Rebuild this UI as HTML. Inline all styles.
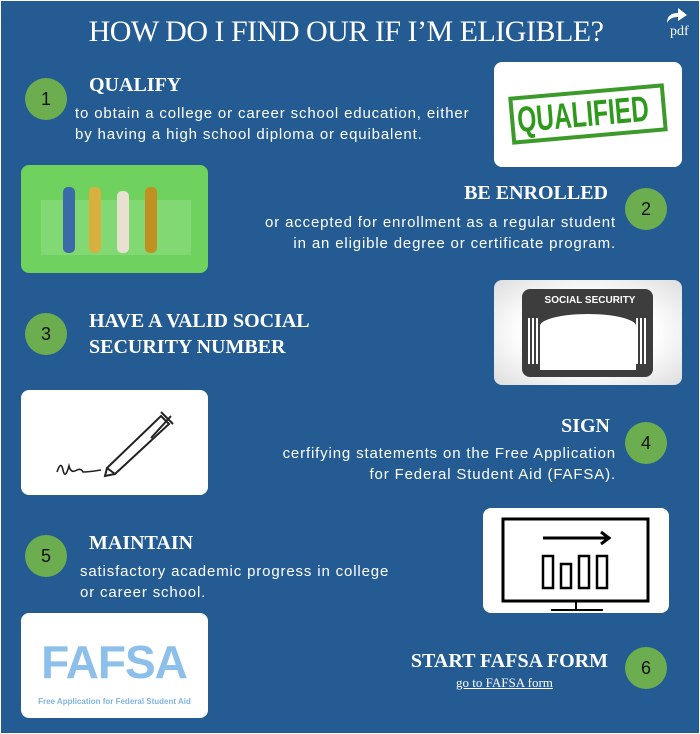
<!DOCTYPE html>
<html><head><meta charset="utf-8"><style>
*{margin:0;padding:0;box-sizing:border-box}
body{width:700px;height:734px;background:#fff;overflow:hidden;font-family:"Liberation Sans",sans-serif}
#m{position:absolute;left:1px;top:1px;width:698px;height:732px;background:#235b92}
.a{position:absolute}
h1{position:absolute;left:0;width:692px;top:15px;text-align:center;font:normal 30px "Liberation Serif",serif;color:#fff;letter-spacing:-0.5px}
.c{position:absolute;width:42px;height:42px;border-radius:50%;background:#6cae4f;color:#111;font-size:18px;text-align:center;line-height:42px}
.h{position:absolute;font:bold 20px "Liberation Serif",serif;color:#fff;line-height:26px}
.t{position:absolute;font-size:15px;color:#fff;line-height:21px;letter-spacing:0.85px;white-space:nowrap}
.r{text-align:right}
.box{position:absolute;background:#fff;border-radius:8px;overflow:hidden}
</style></head><body><div id="m"></div>
<h1>HOW DO I FIND OUR IF I’M ELIGIBLE?</h1>
<div class="a" style="left:664px;top:7px;color:#fff;font:14px 'Liberation Serif',serif">
<svg width="26" height="16" viewBox="0 0 26 16"><path d="M3 16 Q3 6 14 6 L14 1 L23 8 L14 14 L14 10 Q6 10 3 16Z" fill="#fff"/></svg><div style="margin-top:-4px;margin-left:6px">pdf</div></div>

<div class="c" style="left:25px;top:78px">1</div>
<div class="h" style="left:89px;top:72px">QUALIFY</div>
<div class="t" style="left:75px;top:103px">to obtain a college or career school education, either<br>by having a high school diploma or equibalent.</div>
<div class="box" style="left:494px;top:62px;width:188px;height:105px">
<div class="a" style="left:16px;top:28px;width:156px;height:48px;border:4px solid #3c9a2a;transform:rotate(-5deg);overflow:hidden"><div style="color:#2e9a1c;font:bold 36px 'Liberation Sans',sans-serif;line-height:40px;transform:scaleX(0.68);transform-origin:0 0;white-space:nowrap;margin-left:3px">QUALIFIED</div></div></div>

<div class="box" style="left:21px;top:165px;width:187px;height:108px;background:#6fd15e">
<div class="a" style="left:20px;top:35px;width:150px;height:55px;background:#8fdc80;opacity:.6"></div>
<div class="a" style="left:42px;top:22px;width:12px;height:66px;background:#3a6aa8;border-radius:5px"></div>
<div class="a" style="left:68px;top:22px;width:12px;height:66px;background:#d8b040;border-radius:5px"></div>
<div class="a" style="left:96px;top:26px;width:12px;height:62px;background:#e8e0d0;border-radius:5px"></div>
<div class="a" style="left:124px;top:22px;width:12px;height:66px;background:#c09020;border-radius:5px"></div></div>
<div class="h r" style="right:92px;top:180px">BE ENROLLED</div>
<div class="t r" style="right:84px;top:212px">or accepted for enrollment as a regular student<br>in an eligible degree or certificate program.</div>
<div class="c" style="left:625px;top:188px">2</div>

<div class="c" style="left:25px;top:313px">3</div>
<div class="h" style="left:89px;top:308px">HAVE A VALID SOCIAL<br>SECURITY NUMBER</div>
<div class="box" style="left:494px;top:280px;width:188px;height:105px;background:radial-gradient(#fff 50%,#ddd)">
<div class="a" style="left:28px;top:9px;width:131px;height:88px;background:#3d3d3d;border-radius:8px"></div>
<div class="a" style="left:46px;top:34px;width:96px;height:56px;background:#fff;border-radius:50% 50% 0 0/12px 12px 0 0"></div>
<div class="a" style="left:34px;top:38px;width:12px;height:46px;background:repeating-linear-gradient(90deg,#fff 0 2px,#3d3d3d 2px 4px)"></div>
<div class="a" style="left:142px;top:38px;width:12px;height:46px;background:repeating-linear-gradient(90deg,#fff 0 2px,#3d3d3d 2px 4px)"></div>
<div class="a" style="left:36px;top:15px;width:120px;text-align:center;color:#fff;font:bold 10px 'Liberation Sans',sans-serif">SOCIAL SECURITY</div></div>

<div class="box" style="left:21px;top:390px;width:187px;height:105px">
<svg width="187" height="105"><path d="M36 82 Q40 70 42 80 Q44 90 48 76 Q50 84 56 80 Q60 78 62 82 Q68 82 80 80" stroke="#222" stroke-width="1.6" fill="none"/><path d="M86 78 L140 26 L148 34 L94 84 Z M86 78 L84 86 L94 84" stroke="#222" stroke-width="2" fill="none"/><path d="M140 22 L152 34 M150 26 L130 48" stroke="#222" stroke-width="2" fill="none"/></svg></div>
<div class="h r" style="right:90px;top:413px">SIGN</div>
<div class="t r" style="right:84px;top:443px">cerfifying statements on the Free Application<br>for Federal Student Aid (FAFSA).</div>
<div class="c" style="left:625px;top:422px">4</div>

<div class="c" style="left:25px;top:535px">5</div>
<div class="h" style="left:89px;top:530px">MAINTAIN</div>
<div class="t" style="left:80px;top:561px">satisfactory academic progress in college<br>or career school.</div>
<div class="box" style="left:483px;top:508px;width:186px;height:105px">
<svg width="186" height="105"><rect x="20" y="11" width="145" height="82" fill="none" stroke="#000" stroke-width="3"/><path d="M93 93 V101 M68 102 H120" stroke="#000" stroke-width="2"/><path d="M60 30 H125 M118 24 L126 30 L118 36" stroke="#000" stroke-width="3" fill="none"/><rect x="60" y="48" width="10" height="32" fill="none" stroke="#000" stroke-width="2.5"/><rect x="78" y="56" width="10" height="24" fill="none" stroke="#000" stroke-width="2.5"/><rect x="96" y="48" width="10" height="32" fill="none" stroke="#000" stroke-width="2.5"/><rect x="114" y="48" width="10" height="32" fill="none" stroke="#000" stroke-width="2.5"/></svg></div>

<div class="box" style="left:21px;top:613px;width:187px;height:105px">
<div class="a" style="left:8px;top:22px;width:170px;text-align:center;color:#8cc0ea;font:bold 46px 'Liberation Sans',sans-serif;letter-spacing:-1px">FAFSA</div>
<div class="a" style="left:0;top:84px;width:187px;text-align:center;color:#7fb4e0;font:bold 8px 'Liberation Sans',sans-serif">Free Application for Federal Student Aid</div></div>
<div class="h r" style="right:92px;top:648px">START FAFSA FORM</div>
<div class="a" style="left:456px;top:675px;color:#fff;font:13px 'Liberation Serif',serif;text-decoration:underline">go to FAFSA form</div>
<div class="c" style="left:625px;top:647px">6</div>
</body></html>
